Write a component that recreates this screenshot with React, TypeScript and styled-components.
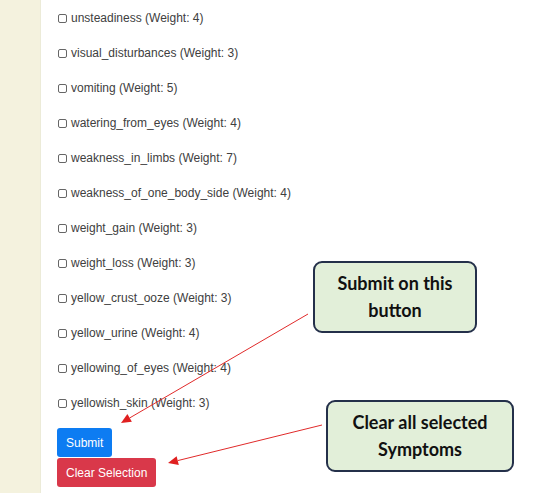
import React from "react";
import styled, { createGlobalStyle } from "styled-components";

const Global = createGlobalStyle`
  html, body { margin: 0; padding: 0; background: #ffffff; }
  body { font-family: "Liberation Sans", Arial, sans-serif; }
`;

const Page = styled.div`
  position: relative;
  display: flex;
  width: 539px;
  height: 493px;
  overflow: hidden;
  background: #ffffff;
`;

const Strip = styled.div`
  width: 40px;
  flex: 0 0 40px;
  background: #f4f2de;
  border-right: 1px solid #ecebd8;
`;

const Content = styled.div`
  display: flex;
  flex-direction: column;
  padding: 11px 0 0 16px;
`;

const List = styled.div`
  display: flex;
  flex-direction: column;
  gap: 21px;
`;

const Row = styled.label`
  display: flex;
  align-items: center;
  gap: 4px;
  height: 14px;
  font-size: 12px;
  color: #404040;
  white-space: nowrap;
`;

const Box = styled.input.attrs({ type: "checkbox" })`
  appearance: none;
  width: 9px;
  height: 9px;
  margin: 0 0 0 1px;
  border: 1px solid #666;
  border-radius: 2px;
  background: #fff;
`;

const Buttons = styled.div`
  display: flex;
  flex-direction: column;
  align-items: flex-start;
  gap: 1px;
  margin-top: 18px;
`;

const Btn = styled.button<{ $variant: "primary" | "danger" }>`
  height: 29px;
  padding: 0 9px;
  border: none;
  border-radius: 3px;
  font-family: "Liberation Sans", Arial, sans-serif;
  font-size: 12px;
  color: #ffffff;
  background: ${(p) => (p.$variant === "primary" ? "#0d7cf2" : "#d9384a")};
`;

const Callout = styled.div<{ $x: number; $y: number; $w: number; $h: number }>`
  position: absolute;
  left: ${(p) => p.$x}px;
  top: ${(p) => p.$y}px;
  width: ${(p) => p.$w}px;
  height: ${(p) => p.$h}px;
  box-sizing: border-box;
  border: 2px solid #24304a;
  border-radius: 9px;
  background: #e2efd9;
  display: flex;
  align-items: center;
  justify-content: center;
  text-align: center;
  font-family: Lato, "Noto Sans", sans-serif;
  font-weight: 700;
  font-size: 18px;
  line-height: 27px;
  color: #111;
`;

const Overlay = styled.svg`
  position: absolute;
  left: 0;
  top: 0;
  pointer-events: none;
`;

const symptoms: [string, number][] = [
  ["unsteadiness", 4],
  ["visual_disturbances", 3],
  ["vomiting", 5],
  ["watering_from_eyes", 4],
  ["weakness_in_limbs", 7],
  ["weakness_of_one_body_side", 4],
  ["weight_gain", 3],
  ["weight_loss", 3],
  ["yellow_crust_ooze", 3],
  ["yellow_urine", 4],
  ["yellowing_of_eyes", 4],
  ["yellowish_skin", 3],
];

function Arrow({ x1, y1, x2, y2 }: { x1: number; y1: number; x2: number; y2: number }) {
  const a = Math.atan2(y2 - y1, x2 - x1);
  const len = 10;
  const w = 4.5;
  const bx = x2 - len * Math.cos(a);
  const by = y2 - len * Math.sin(a);
  const px = -Math.sin(a) * w;
  const py = Math.cos(a) * w;
  return (
    <g>
      <line x1={x1} y1={y1} x2={bx} y2={by} stroke="#e02a2a" strokeWidth={1} />
      <polygon
        points={`${x2},${y2} ${bx + px},${by + py} ${bx - px},${by - py}`}
        fill="#e02020"
      />
    </g>
  );
}

export default function App() {
  return (
    <>
      <Global />
      <Page>
        <Strip />
        <Content>
          <List>
            {symptoms.map(([name, w]) => (
              <Row key={name}>
                <Box />
                {name} (Weight: {w})
              </Row>
            ))}
          </List>
          <Buttons>
            <Btn $variant="primary">Submit</Btn>
            <Btn $variant="danger">Clear Selection</Btn>
          </Buttons>
        </Content>
        <Overlay width={539} height={493}>
          <Arrow x1={308} y1={314} x2={121} y2={423} />
          <Arrow x1={322} y1={425} x2={168} y2={463} />
        </Overlay>
        <Callout $x={313} $y={261} $w={164} $h={72}>
          Submit on this
          <br />
          button
        </Callout>
        <Callout $x={326} $y={400} $w={188} $h={72}>
          Clear all selected
          <br />
          Symptoms
        </Callout>
      </Page>
    </>
  );
}
